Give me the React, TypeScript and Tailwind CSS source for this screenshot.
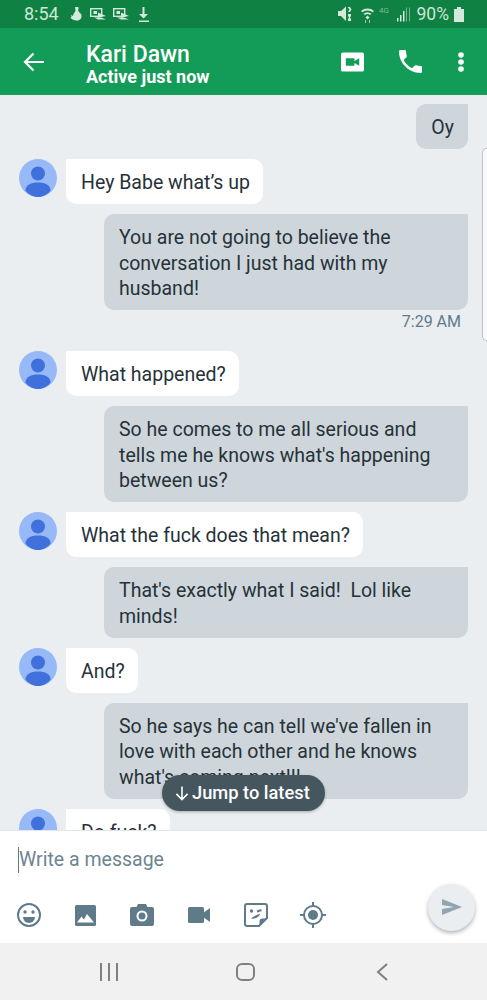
import React from "react";

const ink = "#5f7b8a";
const st = "#d5e8dc";

function Avatar() {
  return (
    <svg width="38" height="38" viewBox="0 0 38 38" className="shrink-0">
      <circle cx="19" cy="19" r="19" fill="#97b9f8" />
      <circle cx="19" cy="14.500" r="7" fill="#3f70dc" />
      <path d="M6.500 31.500C6.500 26 12 23.500 19 23.500s12.500 2.500 12.500 8c-3 4-7.500 6.500-12.500 6.500s-9.500-2.500-12.500-6.500z" fill="#3f70dc" />
    </svg>
  );
}

function In({ children }: { children: React.ReactNode }) {
  return (
    <div className="flex items-start gap-[9px] pl-[19px]">
      <Avatar />
      <div className="bg-white rounded-[10px] rounded-tl-none pl-[15px] pr-[13px] pt-[11px] pb-[8.500px] text-[19.500px] leading-[25.500px] text-[#263238]">
        {children}
      </div>
    </div>
  );
}

function Out({ children }: { children: React.ReactNode }) {
  return (
    <div className="flex justify-end pr-[19px]">
      <div className="max-w-[364px] bg-[#ced6dc] rounded-[10px] rounded-tr-none pl-[15px] pr-[14px] pt-[11px] pb-[8.500px] text-[19.500px] leading-[25.500px] text-[#263238] whitespace-pre-wrap">
        {children}
      </div>
    </div>
  );
}

function Envelope({ x }: { x: number }) {
  return (
    <g transform={`translate(${x} 3)`}>
      <rect x="0.700" y="0.700" width="11" height="7.600" fill="none" stroke={st} strokeWidth="1.400" />
      <rect x="3.500" y="3" width="3.500" height="3" fill={st} />
      <path d="M8 4.500l8 3.500-8 1.500zM4 9.500h7l5 2H8z" fill={st} />
    </g>
  );
}

export default function App() {
  return (
    <div className="w-[487px] h-[1000px] flex flex-col overflow-hidden bg-white font-['Roboto',sans-serif]">
      <div className="h-[28px] shrink-0 bg-[#0f8143] flex items-center justify-between pl-[24px] pr-[23px] text-[#cfe6d8]">
        <div className="flex items-center gap-[11px]">
          <span className="text-[18px] leading-[28px]">8:54</span>
          <svg width="79" height="18" viewBox="0 0 79 18" fill={st}>
            <path d="M5 2h3.500v2.500H8c0 1.500 1 2.500 2.500 4 1.500 1.500 1.500 4.500-.5 6-.5.500-1.500 1-2.500 1-2 0-5-.5-7-2.500l1-1-.5-2L3 11l.5-2 2-3z" />
            <Envelope x={20} />
            <Envelope x={43} />
            <path d="M72.500 2h2v7H78l-4.500 4.500L69 9h3.500zM69 15.500h10V17H69z" />
          </svg>
        </div>
        <div className="flex items-center">
          <svg width="72" height="18" viewBox="0 0 72 18" fill={st}>
            <path d="M0 6h3l5-4.500V16L3 11H0zM9.500 2l2 2.500L10 7h2l1.500-2.500L12 2zM10 9h3v2l-1 1.500 1 1.500v2h-3v-2l1-1.500-1-1.500z" />
            <path d="M23 6a10 10 0 0 1 13 0l-1.300 1.300a8 8 0 0 0-10.400 0zM25.500 8.700a6.500 6.500 0 0 1 8 0l-1.300 1.300a4.500 4.500 0 0 0-5.400 0zM29.500 10.500l2 2-2 2-2-2z" />
            <path d="M27 15h1v3h-1zM31 15h1v3h-1z" opacity="0.7" />
            <text x="41" y="8" fontSize="8" opacity="0.55" fontFamily="Roboto">4G</text>
            <rect x="59" y="13" width="1.500" height="3.500" />
            <rect x="62" y="10" width="1.500" height="6.500" />
            <rect x="65" y="6" width="1.500" height="10.500" />
            <rect x="68" y="2.500" width="1" height="14" opacity="0.5" />
            <rect x="71" y="2.500" width="1" height="14" opacity="0.5" />
          </svg>
          <span className="ml-[7px] text-[17.500px] leading-[28px]">90%</span>
          <svg width="10" height="15" viewBox="0 0 10 15" fill={st} className="ml-[5px]">
            <path d="M3 0h4v2h3v13H0V2h3z" />
          </svg>
        </div>
      </div>

      <div className="h-[67px] shrink-0 bg-[#129c58] flex items-center text-white pl-[23px] pr-[23px]">
        <svg width="22" height="20" viewBox="0 0 22 20" fill="none" stroke="#fff" strokeWidth="2.200">
          <path d="M21 10H2M10.500 1.500 2 10l8.500 8.500" />
        </svg>
        <div className="ml-[41px] flex-1 pt-[5px]">
          <div className="text-[23px] leading-[24px] font-medium">Kari Dawn</div>
          <div className="text-[18px] leading-[19px] font-bold">Active just now</div>
        </div>
        <svg width="23" height="20" viewBox="0 0 24 20" className="mr-[35px]">
          <rect width="24" height="20" rx="2" fill="#fff" />
          <path d="M5 6h9v8H5zM14 9l5-3v8l-5-3z" fill="#129c58" />
        </svg>
        <svg width="23" height="23" viewBox="3 3 18 18" fill="#fff" className="mr-[36px]">
          <path d="M6.620 10.790c1.440 2.830 3.760 5.140 6.590 6.590l2.200-2.200c.27-.27.67-.36 1.020-.24 1.120.37 2.330.57 3.570.57.55 0 1 .45 1 1V20c0 .55-.45 1-1 1-9.390 0-17-7.610-17-17 0-.55.45-1 1-1h3.500c.55 0 1 .45 1 1 0 1.250.2 2.450.57 3.570.11.35.03.74-.25 1.020l-2.200 2.200z" />
        </svg>
        <svg width="6" height="20" viewBox="0 0 6 20" fill="#fff">
          <circle cx="3" cy="3" r="2.800" />
          <circle cx="3" cy="10" r="2.800" />
          <circle cx="3" cy="17" r="2.800" />
        </svg>
      </div>

      <div className="relative h-[735px] shrink-0 overflow-hidden bg-[#ebeef1]">
        <div className="flex flex-col gap-[10px] pt-[9px]">
          <Out>Oy</Out>
          <In>Hey Babe what’s up</In>
          <div>
            <Out>You are not going to believe the conversation I just had with my husband!</Out>
            <div className="text-right pr-[26px] pt-[2px] h-[21px] text-[16px] leading-[20px] text-[#5f7b8a]">7:29 AM</div>
          </div>
          <div className="mt-[10px]">
            <In>What happened?</In>
          </div>
          <Out>So he comes to me all serious and tells me he knows what's happening between us?</Out>
          <In>What the fuck does that mean?</In>
          <Out>{"That's exactly what I said!  Lol like minds!"}</Out>
          <In>And?</In>
          <Out>So he says he can tell we've fallen in love with each other and he knows what's coming next!!!</Out>
          <In>Do fuck?</In>
        </div>
        <div className="absolute right-0 top-[53px] h-[193px] w-[5px] rounded-l-[5px] border border-r-0 border-[#bcc4c9] bg-[#f8f9fa]" />
        <div className="absolute left-[162px] top-[680px] h-[36px] w-[163px] rounded-[18px] bg-[#46565e] shadow-[0_1px_3px_rgba(0,0,0,0.3)] flex items-center pl-[13px] gap-[3px] text-white text-[18.300px] font-medium">
          <svg width="14" height="16" viewBox="0 0 15 16" fill="none" stroke="#fff" strokeWidth="1.700">
            <path d="M7.500 1v14M1.500 9l6 6 6-6" />
          </svg>
          Jump to latest
        </div>
      </div>

      <div className="relative h-[113px] shrink-0 bg-white border-t border-[#e3e6e8]">
        <div className="flex items-center pl-[18px] pt-[16px] text-[19.500px] leading-[26px] text-[#6d8591]">
          <span className="w-px h-[26px] bg-[#5f7b8a]" />
          Write a message
        </div>
        <div className="flex items-center gap-[34px] pl-[17px] mt-[29px]">
          <svg width="24" height="24" viewBox="0 0 24 24" fill="none" stroke={ink} strokeWidth="2">
            <circle cx="12" cy="12" r="11" />
            <circle cx="8" cy="9" r="1.700" fill={ink} stroke="none" />
            <circle cx="16" cy="9" r="1.700" fill={ink} stroke="none" />
            <path d="M6 14h12a6 6 0 0 1-12 0z" fill={ink} stroke="none" />
          </svg>
          <svg width="21" height="21" viewBox="0 0 21 21">
            <rect width="21" height="21" rx="1.500" fill={ink} />
            <path d="M2 17.500 6.500 11.500l2.500 3 3-5.500 7 8.500z" fill="#fff" />
          </svg>
          <svg width="24" height="22" viewBox="0 0 24 22" fill={ink}>
            <path d="M2 3h4.500l1.500-3h8l1.500 3H22a2 2 0 0 1 2 2v15a2 2 0 0 1-2 2H2a2 2 0 0 1-2-2V5a2 2 0 0 1 2-2z" />
            <circle cx="12" cy="12" r="5.500" fill="#fff" />
            <circle cx="12" cy="12" r="3.500" fill={ink} />
          </svg>
          <svg width="22" height="16" viewBox="0 0 22 16" fill={ink}>
            <rect width="16" height="16" rx="1.500" />
            <path d="M15 6l7-5v14l-7-5z" />
          </svg>
          <svg width="24" height="24" viewBox="0 0 24 24" fill="none" stroke={ink} strokeWidth="2">
            <path d="M3 1h18a2 2 0 0 1 2 2v12l-8 8H3a2 2 0 0 1-2-2V3a2 2 0 0 1 2-2z" />
            <path d="M15.500 23v-4.500a3 3 0 0 1 3-3H23z" fill={ink} stroke="none" />
            <path d="M7 15.500c4 .8 8-1 9.500-5-3 1.500-6 2-9.500 5z" fill={ink} stroke="none" />
            <circle cx="7.500" cy="8" r="1.700" fill={ink} stroke="none" />
            <path d="M13 8.500l4.500-1.500" />
          </svg>
          <svg width="26" height="26" viewBox="0 0 26 26" fill="none" stroke={ink} strokeWidth="2" className="-ml-[2px]">
            <circle cx="13" cy="13" r="9" />
            <circle cx="13" cy="13" r="5" fill={ink} stroke="none" />
            <path d="M13 0v4M13 22v4M0 13h4M22 13h4" />
          </svg>
        </div>
        <div className="absolute right-[12px] top-[53px] h-[47px] w-[47px] rounded-full bg-[#ebeef1] shadow-[0_2px_4px_rgba(0,0,0,0.3)] flex items-center justify-center">
          <svg width="20" height="16" viewBox="0 0 20 16" fill="#91a5af" className="-mt-[1px]">
            <path d="M0 0l20 8-20 8V10l12-2L0 6z" />
          </svg>
        </div>
      </div>

      <div className="flex-1 bg-[#f1f1f1] flex items-center pl-[100px]">
        <svg width="18" height="18" viewBox="0 0 18 18" fill="#808080">
          <rect x="0" y="0" width="2" height="18" />
          <rect x="8" y="0" width="2" height="18" />
          <rect x="16" y="0" width="2" height="18" />
        </svg>
        <svg width="19" height="18" viewBox="0 0 19 18" fill="none" stroke="#808080" strokeWidth="2" className="ml-[118px]">
          <rect x="1" y="1" width="17" height="16" rx="5" />
        </svg>
        <svg width="13" height="18" viewBox="0 0 13 18" fill="none" stroke="#808080" strokeWidth="2" className="ml-[121px]">
          <path d="M11 1 2 9l9 8" />
        </svg>
      </div>
    </div>
  );
}
